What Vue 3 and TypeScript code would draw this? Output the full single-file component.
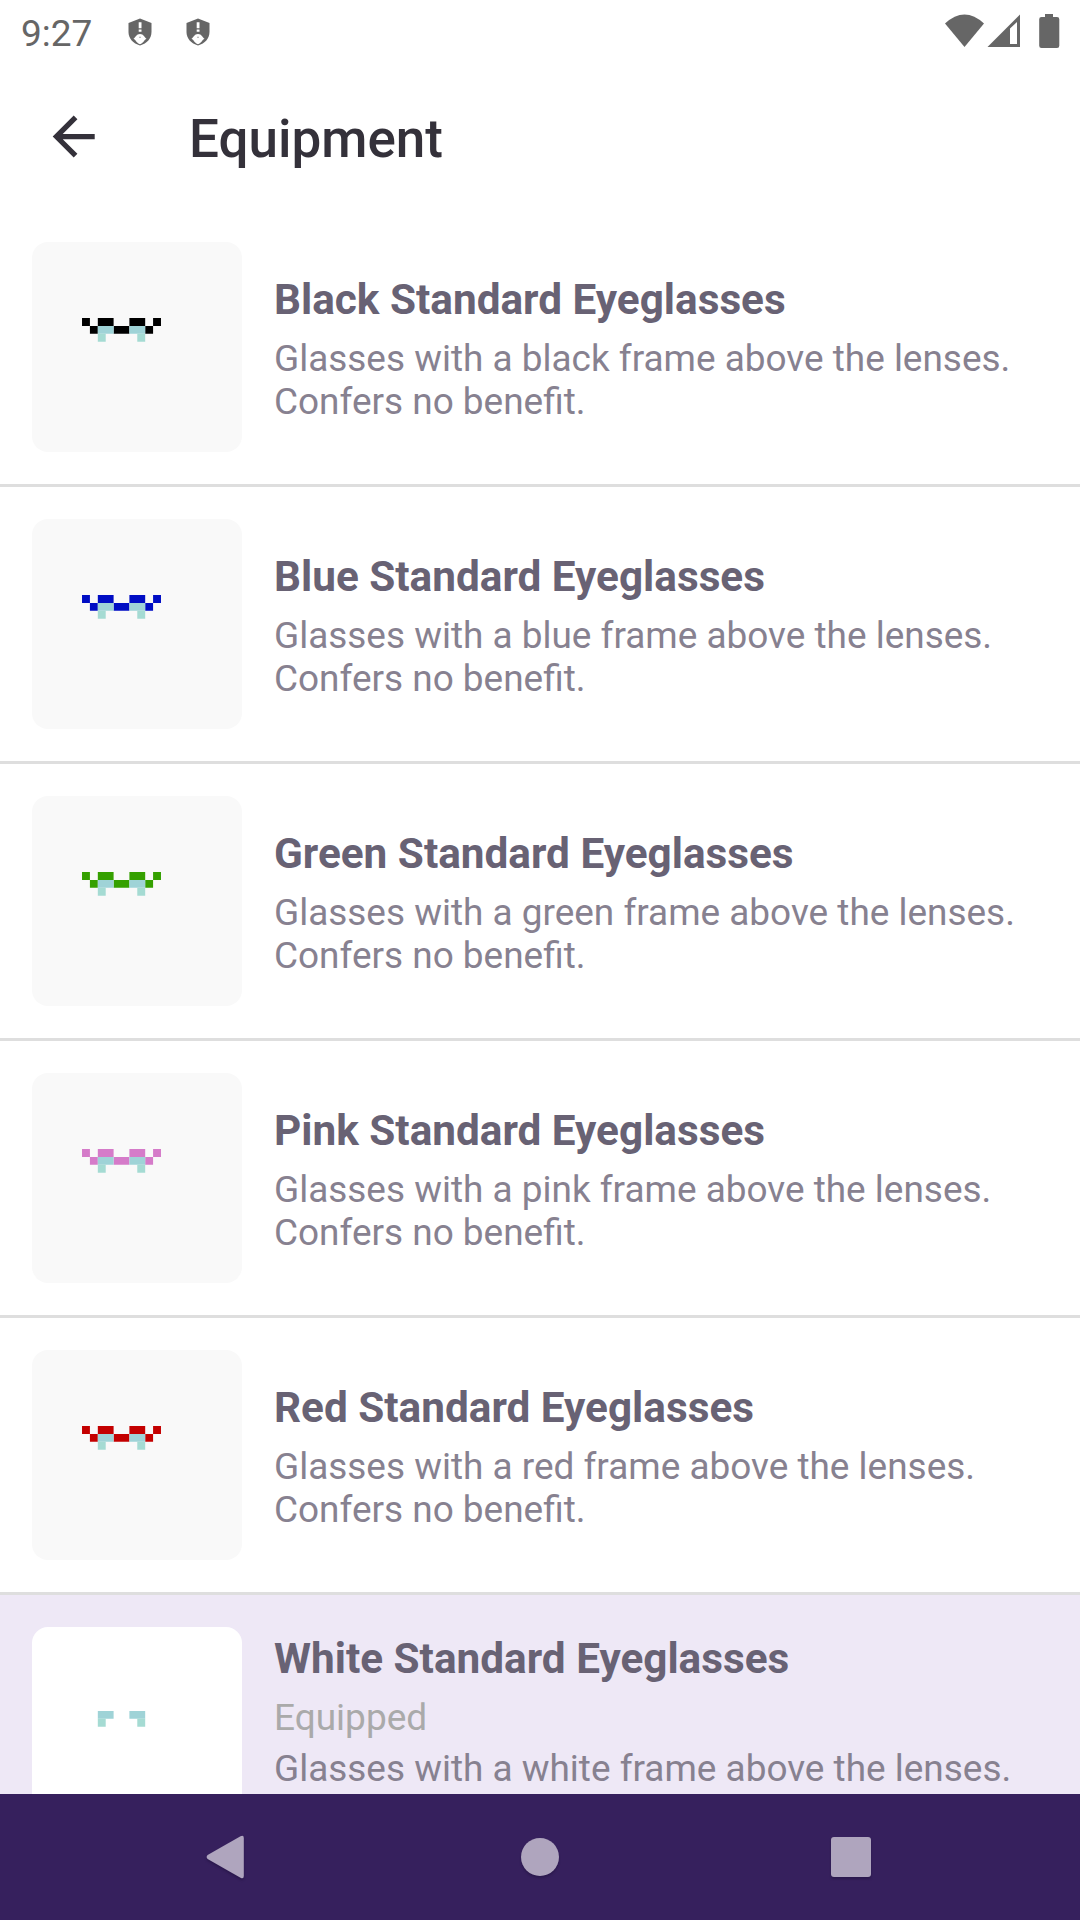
<script setup lang="ts">
interface Gear {
  name: string
  description: string
  frame: string
  equipped?: boolean
}

const makeGear = (color: string, frame: string, equipped = false): Gear => ({
  name: `${color} Standard Eyeglasses`,
  description: `Glasses with a ${color.toLowerCase()} frame above the lenses. Confers no benefit.`,
  frame,
  equipped,
})

const gear: Gear[] = [
  makeGear('Black', '#000000'),
  makeGear('Blue', '#000dc4'),
  makeGear('Green', '#35a000'),
  makeGear('Pink', '#d57bc9'),
  makeGear('Red', '#c40000'),
  makeGear('White', '#ffffff', true),
]
</script>

<template>
  <div class="screen">
    <header class="status">
      <span class="time">9:27</span>
      <svg v-for="n in 2" :key="n" class="shield" viewBox="0 0 24 28">
        <path fill="#666" d="M12 .5 23.500 5v9c0 6.500-4.500 11.500-11.500 13.500C5 25.500.5 20.500.5 14V5Z" />
        <path fill="#fff" d="M10.700 4.300h2.800v6h-2.800zM10.700 11.500h2.800v2.300h-2.800zM5.500 20.700C7.500 19.500 8.200 16 12 16s4.500 3.500 6.500 4.700C16.300 21.700 15.500 25 12 26.200 8.500 25 7.700 21.700 5.500 20.700Z" />
        <path fill="#aaa" d="M11 18.800h2v1h-2z" />
      </svg>
      <svg class="indicators" viewBox="0 0 116 36">
        <path fill="#666" d="M0 9.500Q19.500-8.500 39 9.500L19.500 33Z" />
        <path fill="#666" fill-rule="evenodd" d="M42.500 33 75 .5V33ZM65 14.500V30h7V8Z" />
        <path fill="#666" d="M100 0h8v3h4a2.300 2.300 0 0 1 2.300 2.300V31.700A2.300 2.300 0 0 1 112 34H96.500a2.300 2.300 0 0 1-2.300-2.300V5.300A2.300 2.300 0 0 1 96.500 3H100Z" />
      </svg>
    </header>

    <div class="toolbar">
      <svg class="back" viewBox="0 0 43 43">
        <path fill="#34313a" transform="translate(-9.800 -10) scale(2.625)" d="M20 11H7.830l5.590-5.590L12 4l-8 8 8 8 1.410-1.410L7.830 13H20z" />
      </svg>
      <h1>Equipment</h1>
    </div>

    <main class="list">
      <article v-for="item in gear" :key="item.name" class="row" :class="{ equipped: item.equipped }">
        <div class="thumb">
          <svg class="sprite" viewBox="0 0 10 3">
            <path :fill="item.frame" d="M0 0h1v1h1v1H1V1H0zM2 0h2v1H2zM6 0h2v1H6zM9 0h1v1H9zM4 1h2v1H4zM8 1h1v1H8z" />
            <path fill="#9fd3d7" d="M2 1h2v1H2zM6 1h2v1H6z" />
            <path fill="#a5dbd3" d="M2 2h1v1H2zM7 2h1v1H7z" />
          </svg>
        </div>
        <div class="info">
          <h2>{{ item.name }}</h2>
          <p v-if="item.equipped" class="state">Equipped</p>
          <p class="description">{{ item.description }}</p>
        </div>
      </article>
    </main>

    <nav class="navbar">
      <svg viewBox="0 0 60 60">
        <path fill="#afa5be" d="M12.600 28 45.500 9.300Q48.800 7.500 48.800 11V49Q48.800 52.500 45.500 50.700L12.600 32Q10.600 30 12.600 28Z" />
      </svg>
      <svg viewBox="0 0 60 60"><circle cx="30" cy="30" r="19" fill="#afa5be" /></svg>
      <svg viewBox="0 0 60 60"><rect x="6" y="10" width="40" height="40" rx="3" fill="#afa5be" /></svg>
    </nav>
  </div>
</template>

<style>
body {
  margin: 0;
  background: #fff;
}
</style>

<style scoped>
.screen {
  width: 1080px;
  height: 1920px;
  display: flex;
  flex-direction: column;
  overflow: hidden;
  background: #fff;
  font-family: Roboto, sans-serif;
}
h1, h2, p {
  margin: 0;
}
.status {
  flex: none;
  display: flex;
  height: 63px;
}
.time {
  width: 106px;
  padding: 12px 0 0 21px;
  color: #666;
  font-size: 37px;
  line-height: 43px;
}
.shield {
  width: 24px;
  height: 28px;
  margin: 18px 34px 0 0;
}
.shield:first-of-type {
  margin-left: 1px;
}
.indicators {
  width: 116px;
  height: 36px;
  margin: 14px 19px 0 auto;
}
.toolbar {
  flex: none;
  display: flex;
  align-items: flex-start;
  height: 147px;
}
.back {
  width: 43px;
  height: 43px;
  margin: 52px 0 0 52px;
}
h1 {
  margin: 45px 0 0 94px;
  color: #34313a;
  font-size: 53px;
  font-weight: 500;
  line-height: 62px;
}
.list {
  flex: 1;
  min-height: 0;
  overflow: hidden;
}
.row {
  display: flex;
  align-items: center;
  gap: 32px;
  height: 274px;
  padding: 0 32px;
  border-bottom: 3px solid #dedede;
}
.row.equipped {
  background: #eee8f6;
}
.thumb {
  flex: none;
  box-sizing: border-box;
  width: 210px;
  height: 210px;
  padding: 76px 0 0 50px;
  border-radius: 16px;
  background: #f9f9f9;
}
.equipped .thumb {
  background: #fff;
}
.sprite {
  display: block;
  width: 79px;
  height: 23.7px;
  overflow: visible;
  filter: blur(0.6px);
}
.info {
  width: 750px;
  padding-top: 4px;
}
.equipped .info {
  padding-top: 3px;
}
h2 {
  margin-bottom: 13px;
  color: #686274;
  font-size: 42.3px;
  font-weight: 700;
  line-height: 49px;
}
.state {
  margin-bottom: 8px;
  color: #aaa;
  font-size: 37px;
  line-height: 43px;
}
.description {
  color: #878190;
  font-size: 36.95px;
  line-height: 43px;
}
.navbar {
  flex: none;
  display: flex;
  align-items: center;
  justify-content: space-between;
  box-sizing: border-box;
  height: 126px;
  padding: 0 195px;
  background: #36205d;
}
.navbar svg {
  width: 60px;
  height: 60px;
  filter: drop-shadow(0 2px 1px rgba(20, 8, 45, 0.35));
}
</style>
